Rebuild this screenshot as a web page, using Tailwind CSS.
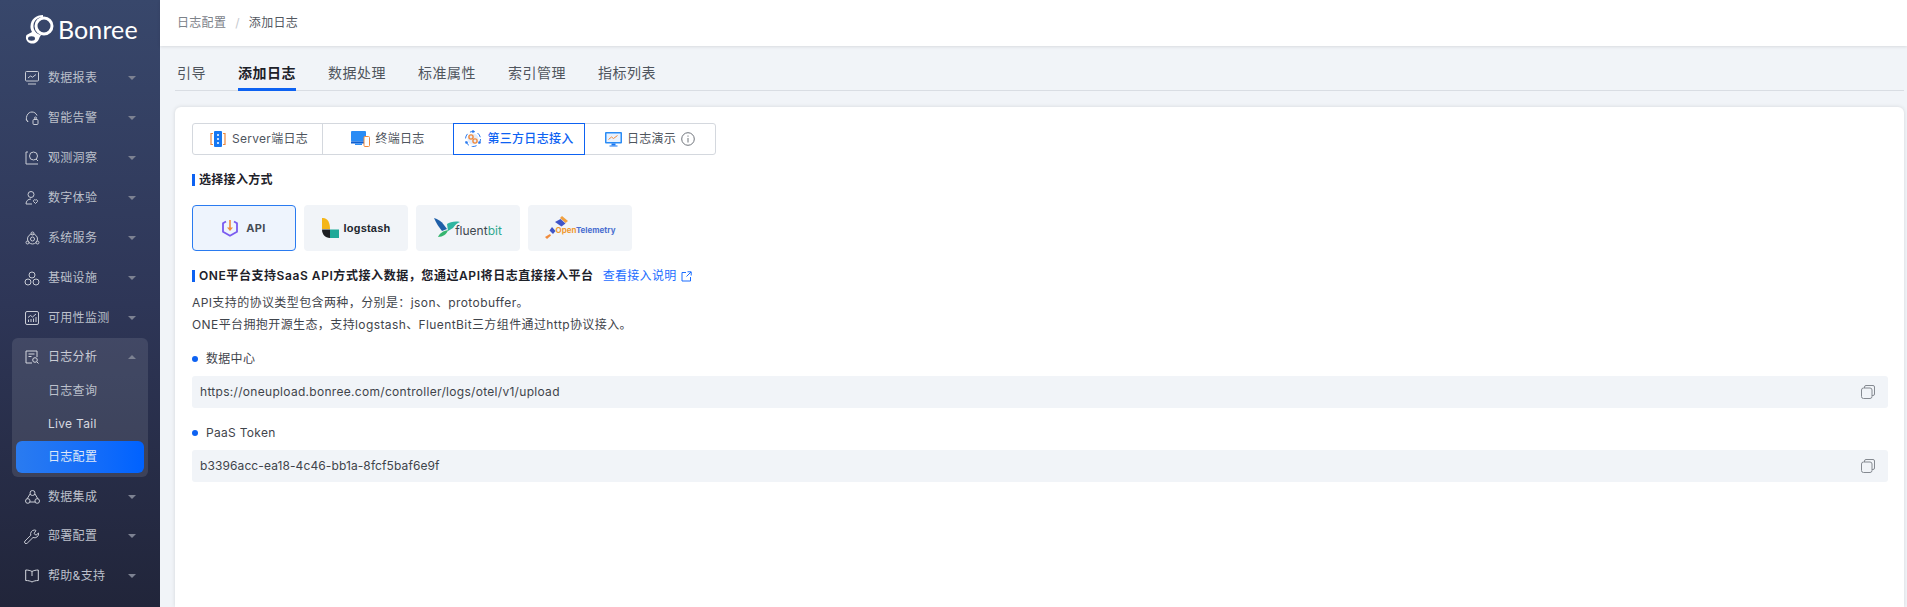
<!DOCTYPE html>
<html lang="zh-CN">
<head>
    <meta charset="UTF-8">
    <meta name="viewport" content="width=device-width, initial-scale=1.0">
    <script src="https://cdn.jsdelivr.net/npm/@tailwindcss/browser@4"></script>
    <title>添加日志</title>
</head>
<body class="bg-[#f1f4f8] font-['Inter','Noto_Sans_CJK_SC',sans-serif]">
<div class="flex h-[607px] w-[1907px] overflow-hidden">
    <!-- sidebar -->
    <aside class="w-[160px] shrink-0 bg-gradient-to-b from-[#38476b] via-[#2e3657] to-[#21253a] text-[12px] tracking-[0.3px] text-[#bcc0cb]">
        <div class="flex h-[58px] items-center pl-[25px]">
            <svg width="33" height="29" viewBox="0 0 33 29">
                <path d="M18 0C11 0 6 4 5.500 11c-.2 2.500.5 4.500 1.500 6L1.500 20C-.5 24 3 29 8 28.500c3 0 5.500-2.500 6.500-6L16 20c-5-1-8-5-7.500-10C9 5 13 2 18 2z" fill="#fff"/>
                <circle cx="19" cy="11" r="8" fill="none" stroke="#fff" stroke-width="3"/>
                <ellipse cx="6.500" cy="23.500" rx="3.500" ry="2.200" fill="#36456a"/>
            </svg>
            <span class="font-['Lato',sans-serif] text-[25px] leading-none font-normal tracking-[0.1px] text-white">Bonree</span>
        </div>
        <nav>
            <div class="flex h-[40px] items-center pl-[25px] pr-[24px]">
                <svg width="14" height="14" viewBox="0 0 14 14" fill="none" stroke="#c9ccd5"><rect x="0.5" y="0.5" width="13" height="9.5" rx="1"/><path d="M3 7l2.5-2 2 1.200L11 3.500M3 13h8"/></svg>
                <span class="ml-[9px] flex-1">数据报表</span>
                <span class="h-0 w-0 border-x-[4px] border-t-[4px] border-x-transparent border-t-[#7d8292]"></span>
            </div>
            <div class="flex h-[40px] items-center pl-[25px] pr-[24px]">
                <svg width="14" height="14" viewBox="0 0 14 14" fill="none" stroke="#c9ccd5"><path d="M3 11C1 9 1 7 2 4.500C3 2 5 1 7 1s4 1 5 3.500M1 8l2 3"/><rect x="8" y="8.500" width="5" height="5" rx="1"/><circle cx="10.500" cy="7" r="1"/></svg>
                <span class="ml-[9px] flex-1">智能告警</span>
                <span class="h-0 w-0 border-x-[4px] border-t-[4px] border-x-transparent border-t-[#7d8292]"></span>
            </div>
            <div class="flex h-[40px] items-center pl-[25px] pr-[24px]">
                <svg width="14" height="14" viewBox="0 0 14 14" fill="none" stroke="#c9ccd5"><path d="M3 1H1v12h12"/><circle cx="8.500" cy="5" r="4"/><path d="M11 8l2 2"/></svg>
                <span class="ml-[9px] flex-1">观测洞察</span>
                <span class="h-0 w-0 border-x-[4px] border-t-[4px] border-x-transparent border-t-[#7d8292]"></span>
            </div>
            <div class="flex h-[40px] items-center pl-[25px] pr-[24px]">
                <svg width="14" height="14" viewBox="0 0 14 14" fill="none" stroke="#c9ccd5"><circle cx="6" cy="3.500" r="3"/><path d="M1 13c0-3 2-5 5-5M1 13h6"/><path d="M10.500 12.500L8.500 10.500a1.300 1.300 0 0 1 2-1.500 1.300 1.300 0 0 1 2 1.500z"/></svg>
                <span class="ml-[9px] flex-1">数字体验</span>
                <span class="h-0 w-0 border-x-[4px] border-t-[4px] border-x-transparent border-t-[#7d8292]"></span>
            </div>
            <div class="flex h-[40px] items-center pl-[25px] pr-[24px]">
                <svg width="15" height="15" viewBox="0 0 15 15" fill="none" stroke="#c9ccd5"><circle cx="7.500" cy="8" r="5"/><circle cx="7.500" cy="8" r="2"/><circle cx="7.500" cy="2.500" r="1.500"/><circle cx="2.500" cy="11.500" r="1.500"/><circle cx="12.500" cy="11.500" r="1.500"/></svg>
                <span class="ml-[8px] flex-1">系统服务</span>
                <span class="h-0 w-0 border-x-[4px] border-t-[4px] border-x-transparent border-t-[#7d8292]"></span>
            </div>
            <div class="flex h-[40px] items-center pl-[24px] pr-[24px]">
                <svg width="16" height="15" viewBox="0 0 16 15" fill="none" stroke="#c9ccd5"><circle cx="8" cy="4" r="3"/><circle cx="4" cy="11" r="3"/><circle cx="12" cy="11" r="3"/></svg>
                <span class="ml-[8px] flex-1">基础设施</span>
                <span class="h-0 w-0 border-x-[4px] border-t-[4px] border-x-transparent border-t-[#7d8292]"></span>
            </div>
            <div class="flex h-[40px] items-center pl-[25px] pr-[24px]">
                <svg width="14" height="14" viewBox="0 0 14 14" fill="none" stroke="#c9ccd5"><rect x="0.500" y="0.500" width="13" height="13" rx="1.500"/><path d="M3 6.500l2.500-2 2 1.500 3.500-3M3.500 11V8.500M6 11V8M8.500 11V7.500M11 11V6"/></svg>
                <span class="ml-[9px] flex-1">可用性监测</span>
                <span class="h-0 w-0 border-x-[4px] border-t-[4px] border-x-transparent border-t-[#7d8292]"></span>
            </div>
            <div class="mx-[12px] flex flex-col gap-px rounded-md bg-white/10 px-[4px] pb-[4px]">
                <div class="flex h-[38px] items-center pl-[9px] pr-[8px] text-[#c9ccd5]">
                    <svg width="14" height="14" viewBox="0 0 14 14" fill="none" stroke="#d4d7de"><path d="M7 13H1V1h11v6M3.500 4h6M3.500 6.500h3"/><circle cx="10" cy="10" r="2.300"/><path d="M12 12l1.500 1.500"/></svg>
                    <span class="ml-[9px] flex-1">日志分析</span>
                    <span class="h-0 w-0 border-x-[4px] border-b-[4px] border-x-transparent border-b-[#7d8292]"></span>
                </div>
                <div class="-mt-[2px] flex h-[32px] items-center pl-[32px]">日志查询</div>
                <div class="flex h-[32px] items-center pl-[32px] text-[#d8dae0]">Live Tail</div>
                <div class="flex h-[32px] items-center rounded-md bg-gradient-to-r from-[#2a7bf0] to-[#0062ff] pl-[32px] text-[#dfe8f8]">日志配置</div>
            </div>
            <div class="flex h-[39px] items-center pl-[25px] pr-[24px]">
                <svg width="15" height="14" viewBox="0 0 15 14" fill="none" stroke="#c9ccd5"><path d="M5 4L2 9M10 4l3 5M4.500 12h6"/><circle cx="7.500" cy="3" r="2.500"/><circle cx="2.800" cy="11" r="2.300"/><circle cx="12.200" cy="11" r="2.300"/></svg>
                <span class="ml-[8px] flex-1">数据集成</span>
                <span class="h-0 w-0 border-x-[4px] border-t-[4px] border-x-transparent border-t-[#7d8292]"></span>
            </div>
            <div class="flex h-[40px] items-center pl-[24px] pr-[24px]">
                <svg width="16" height="15" viewBox="0 0 16 15" fill="none" stroke="#c9ccd5"><path d="M10.500 1a4 4 0 0 0-3.700 5.300L1 12a1.500 1.500 0 0 0 2.200 2.200L9 8.500A4 4 0 0 0 14.500 4l-2.500 2.200-2-1.700 2-3A4 4 0 0 0 10.500 1z"/></svg>
                <span class="ml-[8px] flex-1">部署配置</span>
                <span class="h-0 w-0 border-x-[4px] border-t-[4px] border-x-transparent border-t-[#7d8292]"></span>
            </div>
            <div class="flex h-[40px] items-center pl-[25px] pr-[24px]">
                <svg width="14" height="14" viewBox="0 0 14 14" fill="none" stroke="#d4d7de"><path d="M7 2.500C5.500 1.500 3 1 0.700 1v10.500C3 11.500 5.500 12 7 13c1.500-1 4-1.500 6.300-1.500V1C11 1 8.500 1.500 7 2.500zM7 2.500V7"/></svg>
                <span class="ml-[9px] flex-1">帮助&amp;支持</span>
                <span class="h-0 w-0 border-x-[4px] border-t-[4px] border-x-transparent border-t-[#7d8292]"></span>
            </div>
        </nav>
    </aside>

    <main class="flex min-w-0 flex-1 flex-col">
        <header class="flex h-[46px] shrink-0 items-center bg-white pb-[1px] pl-[17px] text-[12px] tracking-[0.3px] text-[#7c8289] shadow-[0_1px_3px_rgba(0,0,0,0.1)]">
            <span>日志配置</span>
            <span class="mx-[9px] text-[#c5c9ce]">/</span>
            <span class="text-[#53585f]">添加日志</span>
        </header>

        <div class="flex min-h-0 flex-1 flex-col pl-[15px] pr-[3px]">
            <div class="mt-[17px] flex gap-[32px] border-b border-[#d9dde3] text-[14px] leading-[20px] tracking-[0.5px] text-[#4f555d]">
                <span class="-mb-px pb-[8px] pl-[2px]">引导</span>
                <span class="-mb-px border-b-[3px] border-[#0d62f2] pb-[5px] font-semibold text-[#1d2129]">添加日志</span>
                <span class="-mb-px pb-[8px]">数据处理</span>
                <span class="-mb-px pb-[8px]">标准属性</span>
                <span class="-mb-px pb-[8px]">索引管理</span>
                <span class="-mb-px pb-[8px]">指标列表</span>
            </div>

            <section class="mt-[16px] flex-1 rounded-t-md bg-white px-[17px] pt-[16px] pr-[16px] text-[12px] tracking-[0.3px] text-[#3f444b] shadow-[0_0_4px_rgba(0,0,0,0.12)]">
                <div class="flex h-[32px] w-[524px] rounded-[3px] border border-[#d4d8de] text-[#4f555d]">
                    <div class="flex w-[130px] items-center justify-center gap-[6px] border-r border-[#d4d8de] pl-[3px]">
                        <svg width="16" height="16" viewBox="0 0 16 16"><path d="M3 2.500H1v11h2M13 2.500h2v11h-2" fill="none" stroke="#f08a3c" stroke-width="1.200"/><rect x="4" y="0" width="8" height="16" rx="1" fill="#1677f2"/><path d="M7 4h2M7 8h2M7 12h2" stroke="#fff" stroke-width="1.500"/></svg>
                        <span>Server端日志</span>
                    </div>
                    <div class="flex w-[130px] items-center justify-center gap-[5px]">
                        <svg width="19" height="16" viewBox="0 0 19 16"><rect x="0" y="0" width="15" height="10.500" rx="1" fill="#2a8cf5"/><rect x="0" y="10.500" width="15" height="2" fill="#0f5fd0"/><rect x="4" y="12.500" width="7" height="1.500" fill="#2a8cf5"/><rect x="13" y="5.500" width="5.500" height="10" rx="1" fill="#fff" stroke="#f08a3c"/></svg>
                        <span>终端日志</span>
                    </div>
                    <div class="-my-px flex w-[132px] items-center justify-center gap-[5px] border border-[#0d62f2] font-medium text-[#0d62f2]">
                        <svg width="18" height="18" viewBox="0 0 18 18" fill="none"><circle cx="9" cy="9" r="7.500" stroke="#2a7bf0" stroke-dasharray="5 3"/><circle cx="9" cy="9" r="5.500" fill="#e4eefc"/><circle cx="7" cy="7" r="2.100" stroke="#f08a3c" stroke-width="1.400"/><circle cx="11" cy="11" r="2.100" stroke="#f08a3c" stroke-width="1.400"/><circle cx="9" cy="1.500" r="1.300" fill="#2a7bf0"/><circle cx="2.500" cy="12.500" r="1.300" fill="#2a7bf0"/><circle cx="15.500" cy="12.500" r="1.300" fill="#2a7bf0"/></svg>
                        <span>第三方日志接入</span>
                    </div>
                    <div class="flex w-[130px] items-center justify-center gap-[5px]">
                        <svg width="17" height="16" viewBox="0 0 17 16"><rect x="0" y="1" width="17" height="11.500" rx="1" fill="#2a8cf5"/><rect x="1.500" y="2.500" width="14" height="8.500" fill="#e8f2ff"/><path d="M3.500 8.500L6.500 6l2 1.500 4-3" fill="none" stroke="#f08a3c"/><rect x="6.500" y="12.500" width="4" height="2" fill="#1677f2"/><rect x="4.500" y="14.500" width="8" height="1" fill="#1677f2"/></svg>
                        <span>日志演示</span>
                        <svg width="14" height="14" viewBox="0 0 14 14" fill="none" stroke="#6f747b"><circle cx="7" cy="7" r="6.300"/><path d="M7 6v4.500M7 3.500v1.200"/></svg>
                    </div>
                </div>

                <div class="mt-[15px] flex h-[20px] items-center font-semibold text-[#1d2129]">
                    <span class="mr-[4px] h-[12px] w-[3px] bg-[#0d62f2]"></span>选择接入方式
                </div>

                <div class="mt-[15px] flex gap-[8px]">
                    <div class="flex h-[46px] w-[104px] items-center justify-center gap-[8px] rounded-[4px] border border-[#2a7bf0] bg-[#eef4fd]">
                        <svg width="16" height="18" viewBox="0 0 16 18" fill="none"><path d="M4 2.500L1 4.300v8.500l7 4 7-4V4.300L12 2.500" stroke="#7a5af0" stroke-width="1.800"/><path d="M8 1v9" stroke="#f08a3c" stroke-width="1.600"/><path d="M5 8.500l3 3.500 3-3.500z" fill="#f08a3c"/></svg>
                        <span class="text-[11px] font-bold text-[#454b54]">API</span>
                    </div>
                    <div class="flex h-[46px] w-[104px] items-center justify-center gap-[5px] rounded-[4px] bg-[#f1f4f8]">
                        <svg width="17" height="20" viewBox="0 0 17 20"><path d="M0 0h1c5 0 7 5 7 11H0z" fill="#f5b61a"/><path d="M0 11.500h8V20C3 20 0 16 0 11.500z" fill="#1d1f22"/><rect x="8" y="11.500" width="9" height="8.500" fill="#1fa998"/></svg>
                        <span class="font-['Liberation_Sans',sans-serif] text-[11px] font-bold tracking-[0.2px] text-[#20252b]">logstash</span>
                    </div>
                    <div class="flex h-[46px] w-[104px] items-center justify-center rounded-[4px] bg-[#f1f4f8]">
                        <svg width="26" height="20" viewBox="0 0 26 20"><path d="M0 0c4 1 7 3 10 7l3 4-5 2C5 9 2 5 0 0z" fill="#1f5fa8"/><path d="M13 6c3-2 8-3 13-2-3 1-5 3-7 6l-5 3z" fill="#2fb5a0"/><path d="M4 19c2-4 5-6 10-7-1 4-5 7-10 7z" fill="#35b56e"/></svg>
                        <span class="-ml-[5px] mt-[5px] text-[12px] tracking-normal text-[#3f474f]">fluent<span class="text-[#2fa88f]">bit</span></span>
                    </div>
                    <div class="flex h-[46px] w-[104px] items-center justify-center rounded-[4px] bg-[#f1f4f8]">
                        <svg width="24" height="24" viewBox="0 0 24 24"><path d="M17 0l6 5-2.500 2L15 2z" fill="#f0a040"/><path d="M10 6l5.500-3 5 4.500-4 3z" fill="#3f55c8"/><path d="M7 11l3.500 4-2.500 3-3.500-3.500z" fill="#3f55c8"/><path d="M0 21l5-3 1 1.500-4 3.500z" fill="#f08a3c"/></svg>
                        <span class="-ml-[13px] mt-[3px] text-[8px] font-bold tracking-normal text-[#4a6fd0]"><span class="text-[#f09a30]">Open</span>Telemetry</span>
                    </div>
                </div>

                <div class="mt-[15px] flex h-[20px] items-center">
                    <span class="mr-[4px] h-[12px] w-[3px] bg-[#0d62f2]"></span>
                    <span class="font-semibold tracking-[0.57px] text-[#1d2129]">ONE平台支持SaaS API方式接入数据，您通过API将日志直接接入平台</span>
                    <span class="ml-[9px] text-[#1a6dff]">查看接入说明</span>
                    <svg class="ml-[4px]" width="11" height="11" viewBox="0 0 11 11" fill="none" stroke="#1a6dff"><path d="M5 1.500H1v8.500h8.500V6M6.500 0.800h3.700v3.700M10 1L5.500 5.500"/></svg>
                </div>

                <div class="mt-[6px] text-[12px] leading-[22px] tracking-[0.4px]">
                    <p>API支持的协议类型包含两种，分别是：json、protobuffer。</p>
                    <p>ONE平台拥抱开源生态，支持logstash、FluentBit三方组件通过http协议接入。</p>
                </div>

                <div class="mt-[13px] flex h-[20px] items-center">
                    <span class="mr-[8px] h-[6px] w-[6px] rounded-full bg-[#0d62f2]"></span>数据中心
                </div>
                <div class="mt-[7px] flex h-[32px] items-center justify-between rounded-[3px] bg-[#f1f4f8] pl-[8px] pr-[13px]">
                    <span>https://oneupload.bonree.com/controller/logs/otel/v1/upload</span>
                    <svg width="14" height="14" viewBox="0 0 14 14" fill="none" stroke="#858a91"><rect x="0.500" y="3" width="10.500" height="10.500" rx="2"/><path d="M3.500 3V2a1.500 1.500 0 0 1 1.500-1.500h7a1.500 1.500 0 0 1 1.500 1.500v7a1.500 1.500 0 0 1-1.500 1.500h-1"/></svg>
                </div>

                <div class="mt-[15px] flex h-[20px] items-center">
                    <span class="mr-[8px] h-[6px] w-[6px] rounded-full bg-[#0d62f2]"></span>PaaS Token
                </div>
                <div class="mt-[7px] flex h-[32px] items-center justify-between rounded-[3px] bg-[#f1f4f8] pl-[8px] pr-[13px]">
                    <span class="tracking-[0.1px]">b3396acc-ea18-4c46-bb1a-8fcf5baf6e9f</span>
                    <svg width="14" height="14" viewBox="0 0 14 14" fill="none" stroke="#858a91"><rect x="0.500" y="3" width="10.500" height="10.500" rx="2"/><path d="M3.500 3V2a1.500 1.500 0 0 1 1.500-1.500h7a1.500 1.500 0 0 1 1.500 1.500v7a1.500 1.500 0 0 1-1.500 1.500h-1"/></svg>
                </div>
            </section>
        </div>
    </main>
</div>
</body>
</html>
